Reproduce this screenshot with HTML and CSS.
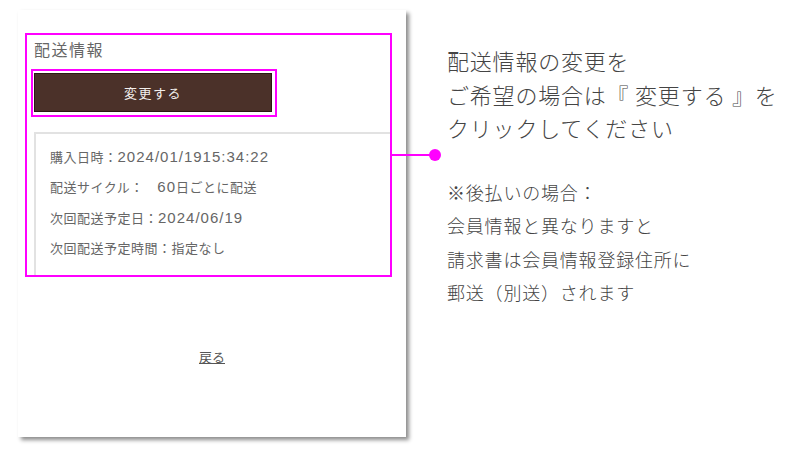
FILE: index.html
```html
<!DOCTYPE html>
<html lang="ja">

<head>
  <meta charset="UTF-8">
  <meta name="viewport" content="width=device-width, initial-scale=1.0">
  <title>配送情報の変更</title>
  <link rel="stylesheet" href="styles.css">
</head>

<body>
  <div id="page">
    <div class="shot">
      <div class="crop">
        <h2 class="shot-title">配送情報</h2>
        <div class="button-mark">
          <button class="change-button">変更する</button>
        </div>
        <div class="info-box">
          <p>購入日時：<span class="num">2024/01/1915:34:22</span></p>
          <p>配送サイクル：　<span class="num">60</span>日ごとに配送</p>
          <p>次回配送予定日：<span class="num">2024/06/19</span></p>
          <p>次回配送予定時間：指定なし</p>
        </div>
      </div>

      <div class="back">
        <a href="#">戻る</a>
      </div>

      <!-- pointer from the marked area to the notes -->
      <div class="connector"><span class="dot"></span></div>
    </div>

    <div class="notes">
      <p class="lead">配送情報の変更を<br>ご希望の場合は『 変更する 』を<br>クリックしてください</p>
      <p class="sub">※後払いの場合：<br>会員情報と異なりますと<br>請求書は会員情報登録住所に<br>郵送（別送）されます</p>
    </div>
  </div>
</body>

</html>
```

FILE: styles.css
```css
body {
  margin: 0;
  background-color: #ffffff;
  font-family: "Noto Sans CJK JP", "Noto Sans", sans-serif;
}

#page {
  display: flex;
  align-items: flex-start;
  width: 800px;
  height: 470px;
  overflow: hidden;
}

.shot {
  position: relative;
  margin: 10px 0 0 18px;
  width: 388px;
  height: 427px;
  background-color: #ffffff;
  box-shadow: 3px 3px 4px rgba(0, 0, 0, 0.45);
  flex-shrink: 0;
}

.crop {
  margin: 23px 0 0 7px;
  width: 359px;
  height: 240px;
  border: 2px solid #ff00ff;
  padding-left: 4px;
  overflow: hidden;
}

.shot-title {
  margin: 4px 0 0 3px;
  font-size: 16px;
  line-height: 20px;
  font-weight: normal;
  letter-spacing: 1.5px;
  color: #666;
}

.button-mark {
  width: 238px;
  margin-top: 10px;
  padding: 2px 3px 3px 1px;
  border: 2px solid #ff00ff;
}

.change-button {
  display: block;
  width: 238px;
  height: 39px;
  background-color: #4b3129;
  border: 1px solid #2a1a14;
  color: #f2eeec;
  font-family: "Noto Sans CJK JP", sans-serif;
  font-size: 13px;
  letter-spacing: 1.5px;
  cursor: pointer;
}

.info-box {
  margin: 15px 0 0 3px;
  width: 370px;
  height: 139px;
  border: 2px solid #e2e2e2;
  padding: 8px 0 0 14px;
  font-size: 13px;
  letter-spacing: 0.5px;
  color: #666;
}

.info-box p {
  margin: 0;
  line-height: 30.3px;
}

.info-box .num {
  font-family: "Liberation Sans", sans-serif;
  font-size: 15px;
  letter-spacing: 1px;
}

.back {
  margin-top: 66px;
  text-align: center;
}

.back a {
  font-size: 13px;
  color: #555;
  text-decoration: underline;
}

.connector {
  position: absolute;
  left: 374px;
  top: 144px;
  width: 43px;
  height: 2px;
  background-color: #ff00ff;
}

.dot {
  position: absolute;
  right: -6px;
  top: -5px;
  width: 12px;
  height: 12px;
  border-radius: 50%;
  background-color: #ff00ff;
}

.notes {
  margin: 44px 0 0 41px;
  color: #444;
  font-weight: 300;
}

.lead {
  margin: 0;
  font-size: 22px;
  line-height: 33.5px;
  letter-spacing: 0.8px;
}

.sub {
  margin: 31px 0 0 0;
  font-size: 18px;
  line-height: 33.5px;
  letter-spacing: 0.8px;
}
```
